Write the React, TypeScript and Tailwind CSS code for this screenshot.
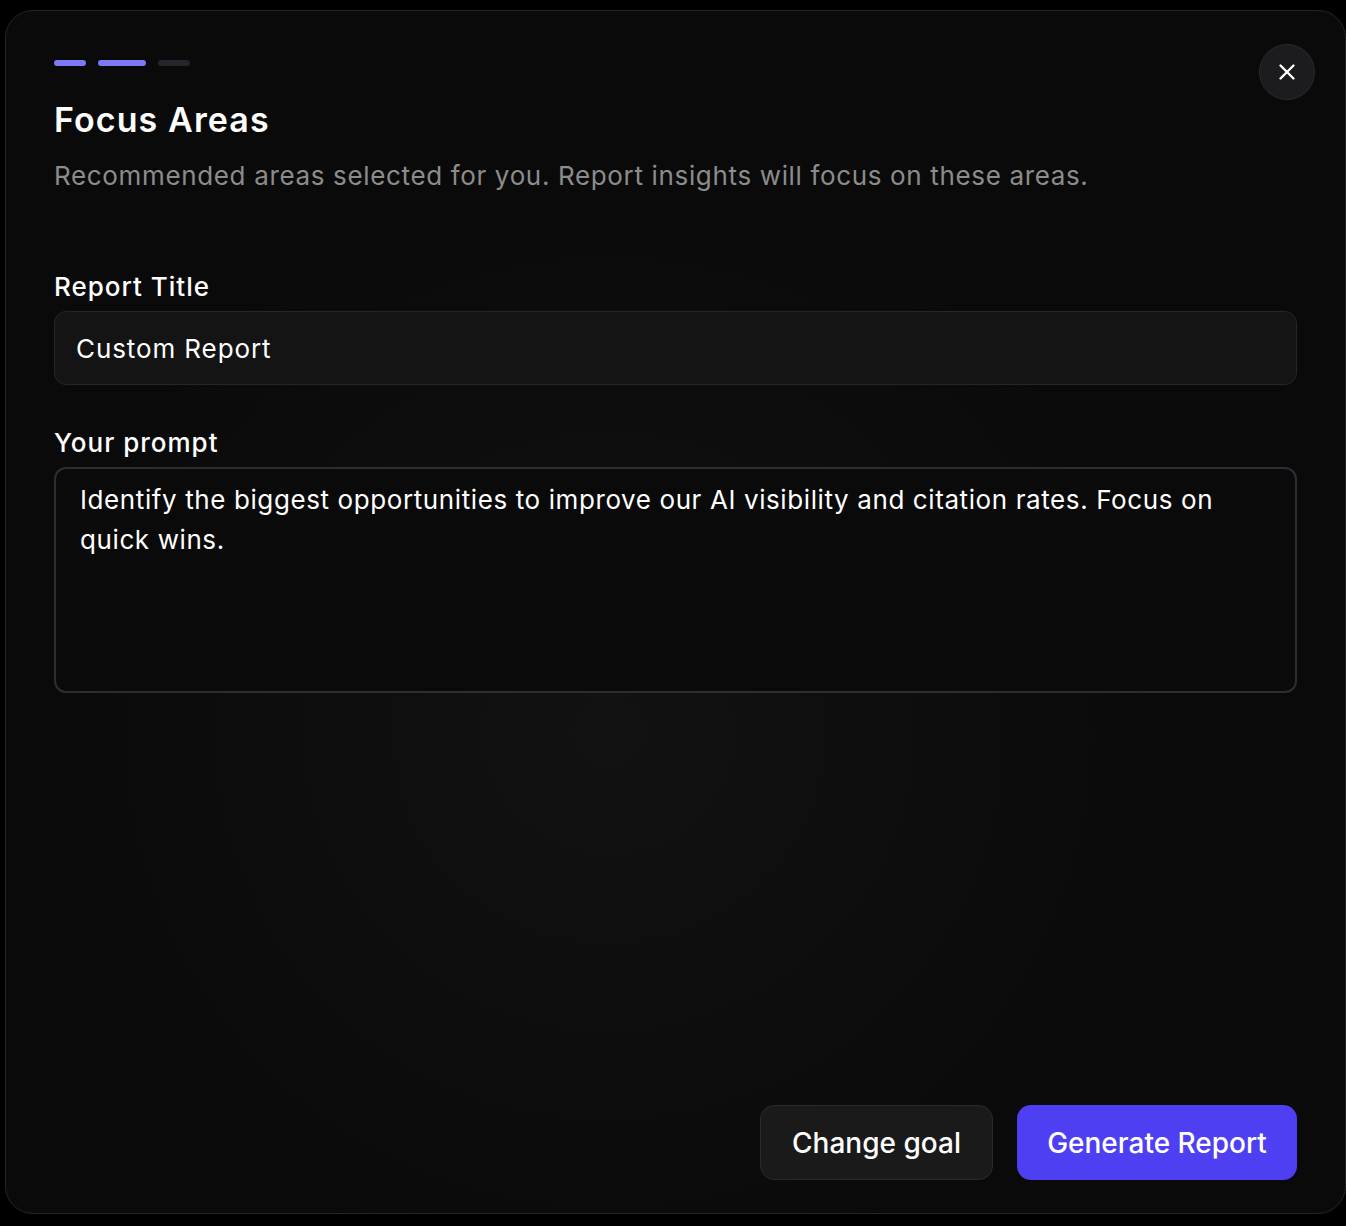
import { X } from "lucide-react"

export default function App() {
  return (
    <div
      className="min-h-screen w-full bg-black pt-[10px] pl-[5px]"
      style={{ fontFamily: "Inter, 'Noto Sans', sans-serif" }}
    >
      <div className="relative flex h-[1204px] w-[1341px] flex-col rounded-[28px] border border-[#262626] bg-[#0a0a0a] bg-[radial-gradient(ellipse_at_45%_60%,#121212_0%,#0a0a0a_55%)] px-[48px] pt-[49px] pb-[33px]">
        {/* Close */}
        <button className="absolute top-[33px] right-[30px] flex h-[56px] w-[56px] items-center justify-center rounded-full border border-[#2a2a2e] bg-[#1c1c1f] text-white">
          <X className="h-[26px] w-[26px]" strokeWidth={2.2} />
        </button>

        {/* Steps */}
        <div className="flex items-center gap-[12px]">
          <div className="h-[6px] w-[32px] rounded-full bg-[#7c78f6]" />
          <div className="h-[6px] w-[48px] rounded-full bg-[#7c78f6]" />
          <div className="h-[6px] w-[32px] rounded-full bg-[#23262b]" />
        </div>

        <h1 className="mt-[34px] text-[34px] leading-[40px] font-semibold tracking-[1.1px] text-white">
          Focus Areas
        </h1>
        <p className="mt-[18px] text-[26px] leading-[36px] tracking-[0.65px] text-[#8c8c8c]">
          Recommended areas selected for you. Report insights will focus on these areas.
        </p>

        <label className="mt-[75px] text-[26px] leading-[36px] font-medium tracking-[1px] text-white">
          Report Title
        </label>
        <input
          readOnly
          value="Custom Report"
          className="mt-[6px] h-[74px] w-full rounded-[12px] border border-[#262626] bg-[#141414] px-[21px] text-[26px] tracking-[0.9px] text-white outline-none"
        />

        <label className="mt-[40px] text-[26px] leading-[36px] font-medium tracking-[1px] text-white">
          Your prompt
        </label>
        <textarea
          readOnly
          value="Identify the biggest opportunities to improve our AI visibility and citation rates. Focus on quick wins."
          className="mt-[6px] h-[226px] w-full resize-none rounded-[12px] border-2 border-[#2a2f36] bg-[#0a0a0a] px-[24px] pt-[11px] text-[26px] leading-[40px] tracking-[0.6px] text-white outline-none"
        />

        <div className="mt-auto flex justify-end gap-[24px]">
          <button className="h-[75px] w-[233px] rounded-[14px] border border-[#2a2a2a] bg-[#1a1a1a] text-[28px] font-medium text-white">
            Change goal
          </button>
          <button className="h-[75px] w-[280px] rounded-[14px] bg-[#4f3ff2] text-[28px] font-medium text-white">
            Generate Report
          </button>
        </div>
      </div>
    </div>
  )
}
